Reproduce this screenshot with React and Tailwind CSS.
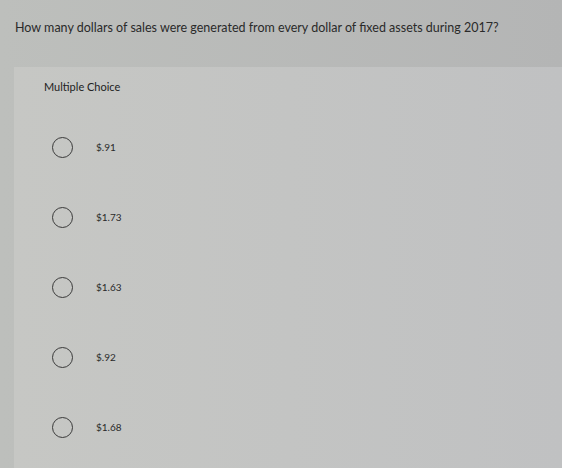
export default function App() {
  const options = ["$.91", "$1.73", "$1.63", "$.92", "$1.68"];
  return (
    <div
      className="w-[562px] h-[468px] overflow-hidden bg-gradient-to-r from-[#bdbfbc] to-[#b4b5b5] flex flex-col"
      style={{ fontFamily: "Lato, 'Open Sans', sans-serif" }}
    >
      <p className="pl-[15px] pt-[22px] text-[12.5px] text-[#2a2a2a] leading-none">
        How many dollars of sales were generated from every dollar of fixed assets during 2017?
      </p>
      <div className="mt-[32px] ml-[14px] flex-1 bg-gradient-to-r from-[#c6c7c4] to-[#c0c1c2] pl-[30px] pt-[14px]">
        <p className="text-[11px] text-[#222] leading-none">Multiple Choice</p>
        <div className="flex flex-col gap-[49px] mt-[45px]">
          {options.map((o) => (
            <div key={o} className="flex items-center h-[21px]">
              <span className="w-[21px] h-[21px] rounded-full border border-[#3a3a3a] ml-[8px]" />
              <span className="ml-[23px] text-[10px] text-[#2a2a2a]">{o}</span>
            </div>
          ))}
        </div>
      </div>
    </div>
  );
}
